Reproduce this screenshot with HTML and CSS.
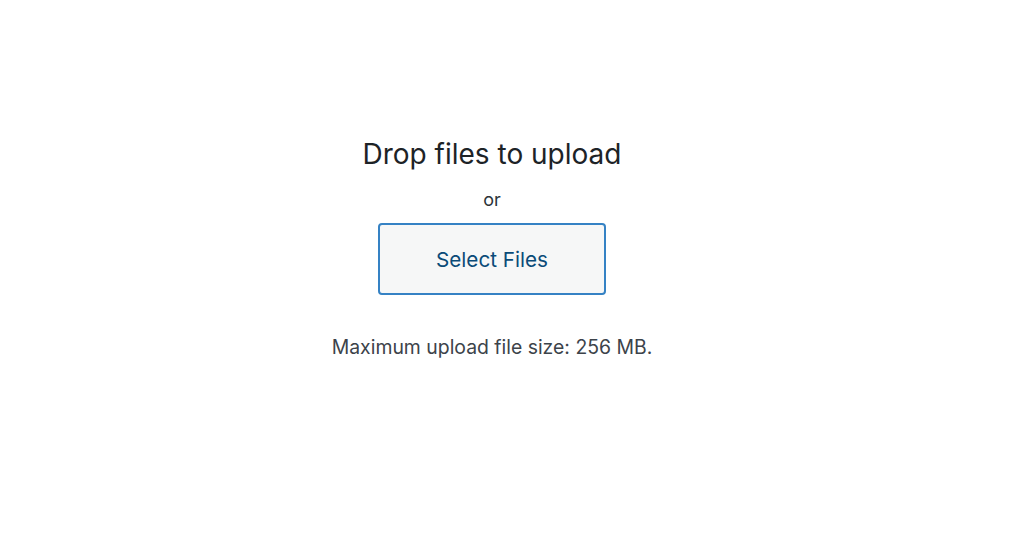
FILE: index.html
```html
<!DOCTYPE html>
<html>
<head>
<meta charset="utf-8">
<link rel="stylesheet" href="styles.css">
</head>
<body>
<div class="uploader">
  <div class="inside">
    <h2 class="title">Drop files to upload</h2>
    <p class="or">or</p>
    <button class="select">Select Files</button>
    <p class="max">Maximum upload file size: 256 MB.</p>
  </div>
</div>
</body>
</html>
```
FILE: styles.css
```css
html, body {
  margin: 0;
  padding: 0;
  background: #ffffff;
}
body {
  font-family: Inter, "Noto Sans", sans-serif;
  color: #1d2327;
}
.uploader {
  width: 984px;
  height: 540px;
  display: flex;
  justify-content: center;
}
.inside {
  display: flex;
  flex-direction: column;
  align-items: center;
  padding-top: 136px;
}
.title {
  margin: 0;
  font-size: 28px;
  line-height: 36px;
  font-weight: 400;
  color: #1d2327;
}
.or {
  margin: 16px 0 0;
  font-size: 18px;
  line-height: 24px;
  color: #2c3338;
}
.select {
  margin-top: 11px;
  width: 228px;
  height: 72px;
  border: 2px solid #3582c4;
  border-radius: 4px;
  background: #f6f7f7;
  color: #0a4b78;
  font-family: Inter, "Noto Sans", sans-serif;
  font-size: 20.7px;
  padding: 0;
}
.max {
  margin: 40px 0 0;
  font-size: 19.4px;
  line-height: 24px;
  color: #3c434a;
}
```
